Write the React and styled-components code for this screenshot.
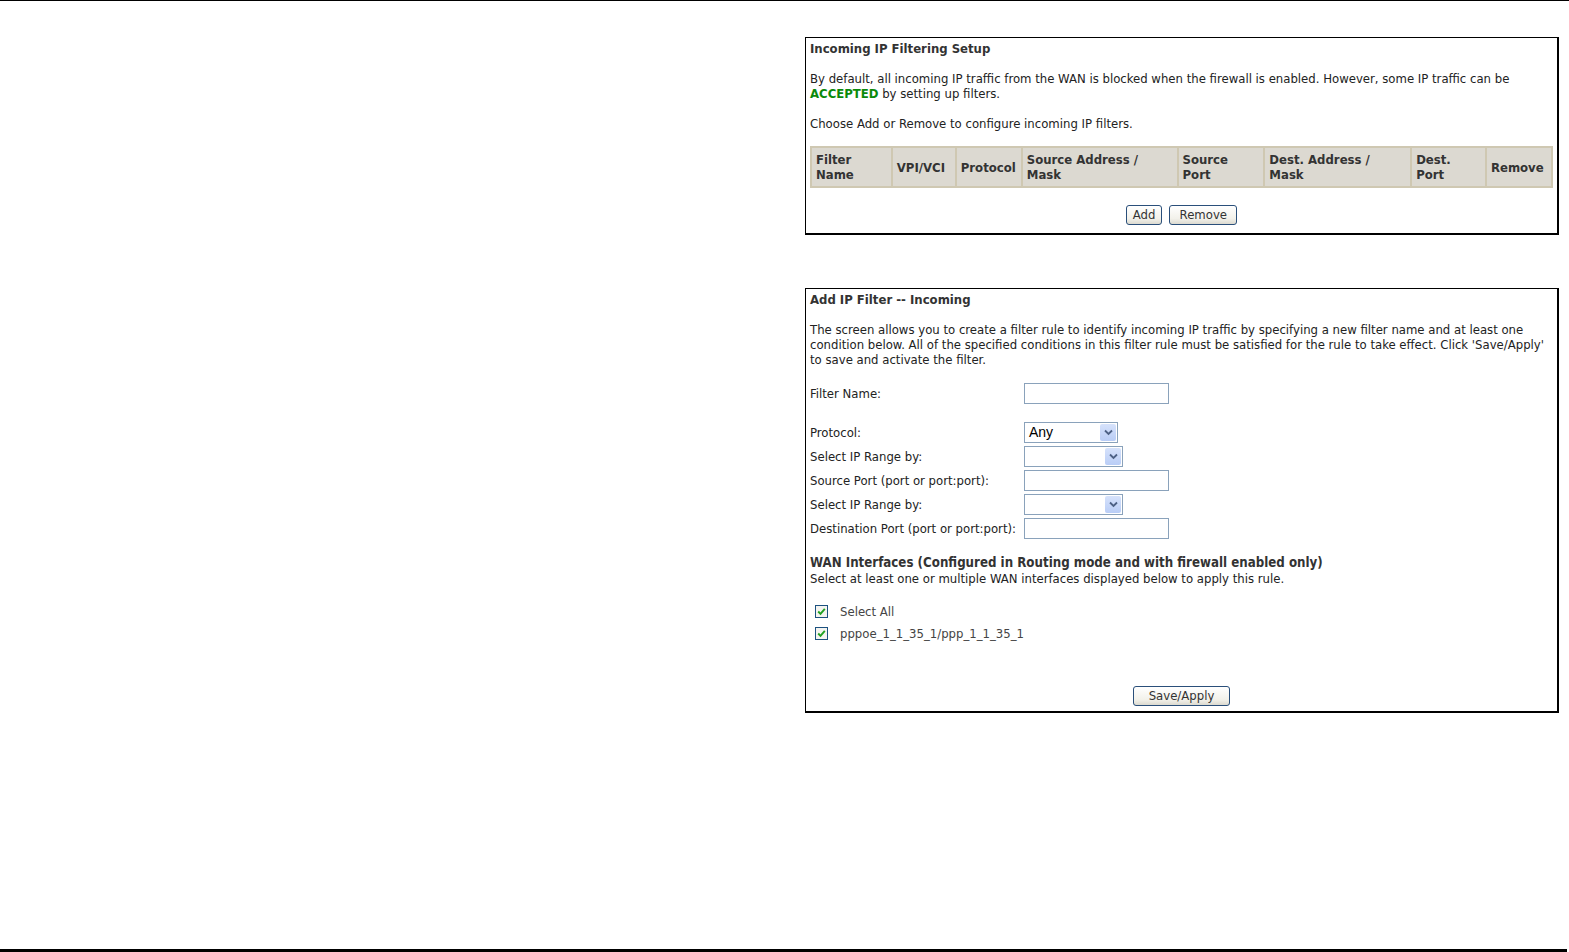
import React from 'react';
import styled, { createGlobalStyle } from 'styled-components';

const Global = createGlobalStyle`
  html, body { margin: 0; padding: 0; background: #fff; }
  body { font-family: "DejaVu Sans Condensed", "DejaVu Sans", sans-serif; font-size: 13px; color: #222; }
  * { box-sizing: border-box; }
`;

const Page = styled.div`
  height: 952px;
  display: flex;
  flex-direction: column;
  border-top: 1px solid #000;
`;

const Main = styled.div`
  flex: 1;
  padding: 36px 0 0 805px;
  display: flex;
  flex-direction: column;
  gap: 53px;
`;

const BottomRule = styled.div`
  height: 3px;
  margin-right: 2px;
  background: #000;
`;

const Panel = styled.div`
  width: 754px;
  height: ${p => p.h}px;
  border-top: 1px solid #000;
  border-left: 1px solid #000;
  border-right: 2px solid #000;
  border-bottom: 2px solid #000;
  padding: 3px 4px 0 4px;
  line-height: 15px;
`;

const Title = styled.div`
  font-weight: bold;
  margin-bottom: 15px;
  color: #333;
`;

const Para = styled.p`
  margin: 0 0 15px;
`;

const Accepted = styled.b`
  color: #0a8a0a;
`;

const Table = styled.table`
  width: 743px;
  border-collapse: collapse;
  border: 1px solid #c9c2ab;
`;

const Th = styled.th`
  width: ${p => p.w}px;
  background: #dcd9d1;
  border: 2px solid #cfc8b2;
  text-align: left;
  vertical-align: middle;
  font-weight: bold;
  padding: 4px 4px;
  line-height: 15px;
  color: #333;
  white-space: nowrap;
`;

const ButtonRow = styled.div`
  display: flex;
  justify-content: center;
  gap: 7px;
  margin-top: ${p => p.top}px;
`;

const Button = styled.button`
  font-family: inherit;
  font-size: 13px;
  color: #333;
  height: 20px;
  min-width: ${p => p.w}px;
  padding: 0 6px;
  border: 1px solid #2a4f7a;
  border-radius: 3px;
  background: linear-gradient(#ffffff, #f2f1ea 70%, #dcdad0);
  line-height: 18px;
`;

const Form = styled.div`
  display: grid;
  grid-template-columns: 214px auto;
  align-items: center;
  row-gap: 3px;
`;

const Label = styled.div`
  margin-top: ${p => p.top || 0}px;
  line-height: 21px;
  white-space: nowrap;
`;

const Field = styled.div`
  margin-top: ${p => p.top || 0}px;
  display: flex;
`;

const TextInput = styled.div`
  width: 145px;
  height: 21px;
  border: 1px solid #8aa2bb;
  background: #fff;
`;

const Select = styled.div`
  width: ${p => p.w}px;
  height: 21px;
  border: 1px solid #8aa2bb;
  background: #fff;
  display: flex;
  align-items: stretch;
  font-family: "Liberation Sans", Arial, sans-serif;
  font-size: 14px;
  color: #000;
`;

const SelectValue = styled.span`
  flex: 1;
  padding-left: 4px;
  line-height: 19px;
`;

const Arrow = styled.span`
  width: 16px;
  margin: 1px;
  border-radius: 2px;
  background: linear-gradient(#d6e2fb, #b9cdf6);
  display: flex;
  align-items: center;
  justify-content: center;
`;

const WanTitle = styled.div`
  font-weight: bold;
  font-size: 13.2px;
  margin-top: 16px;
  line-height: 16px;
  color: #333;
`;

const CheckList = styled.div`
  margin-top: 19px;
  padding-left: 5px;
  display: flex;
  flex-direction: column;
  gap: 9px;
`;

const CheckRow = styled.div`
  display: flex;
  align-items: center;
  gap: 12px;
  line-height: 13px;
  color: #444;
`;

const Box = styled.span`
  width: 13px;
  height: 13px;
  border: 1px solid #1c5180;
  background: #f4f4f0;
  display: flex;
  align-items: center;
  justify-content: center;
`;

const Chevron = () => (
  <svg width="9" height="7" viewBox="0 0 9 7">
    <path d="M1 1.5 L4.5 5 L8 1.5" fill="none" stroke="#4d6185" strokeWidth="1.8" />
  </svg>
);

const Check = () => (
  <svg width="9" height="9" viewBox="0 0 9 9">
    <path d="M1.2 4.5 L3.5 6.8 L7.8 1.8" fill="none" stroke="#21a121" strokeWidth="1.9" />
  </svg>
);

function Dropdown({ w, value }) {
  return (
    <Select w={w}>
      <SelectValue>{value}</SelectValue>
      <Arrow><Chevron /></Arrow>
    </Select>
  );
}

const headers = [
  [['Filter', 'Name'], 81], [['VPI/VCI'], 64], [['Protocol'], 66], [['Source Address /', 'Mask'], 156],
  [['Source', 'Port'], 87], [['Dest. Address /', 'Mask'], 147], [['Dest.', 'Port'], 75], [['Remove'], 66],
];

export default function App() {
  return (
    <Page>
      <Global />
      <Main>
        <Panel h={198}>
          <Title>Incoming IP Filtering Setup</Title>
          <Para>
            By default, all incoming IP traffic from the WAN is blocked when the firewall is enabled. However, some IP traffic can be<br />
            <Accepted>ACCEPTED</Accepted> by setting up filters.
          </Para>
          <Para>Choose Add or Remove to configure incoming IP filters.</Para>
          <Table>
            <thead>
              <tr>
                {headers.map(([lines, w]) => (
                  <Th key={lines.join(' ')} w={w}>
                    {lines.map((l, i) => (
                      <React.Fragment key={l}>{i > 0 && <br />}{l}</React.Fragment>
                    ))}
                  </Th>
                ))}
              </tr>
            </thead>
          </Table>
          <ButtonRow top={17}>
            <Button w={33}>Add</Button>
            <Button w={68}>Remove</Button>
          </ButtonRow>
        </Panel>

        <Panel h={425}>
          <Title>Add IP Filter -- Incoming</Title>
          <Para>
            The screen allows you to create a filter rule to identify incoming IP traffic by specifying a new filter name and at least one
            condition below. All of the specified conditions in this filter rule must be satisfied for the rule to take effect. Click 'Save/Apply'
            to save and activate the filter.
          </Para>
          <Form>
            <Label top={1}>Filter Name:</Label>
            <Field top={1}><TextInput /></Field>
            <Label top={15}>Protocol:</Label>
            <Field top={15}><Dropdown w={94} value="Any" /></Field>
            <Label>Select IP Range by:</Label>
            <Field><Dropdown w={99} value="" /></Field>
            <Label>Source Port (port or port:port):</Label>
            <Field><TextInput /></Field>
            <Label>Select IP Range by:</Label>
            <Field><Dropdown w={99} value="" /></Field>
            <Label>Destination Port (port or port:port):</Label>
            <Field><TextInput /></Field>
          </Form>
          <WanTitle>WAN Interfaces (Configured in Routing mode and with firewall enabled only)</WanTitle>
          <div>Select at least one or multiple WAN interfaces displayed below to apply this rule.</div>
          <CheckList>
            <CheckRow><Box><Check /></Box>Select All</CheckRow>
            <CheckRow><Box><Check /></Box>pppoe_1_1_35_1/ppp_1_1_35_1</CheckRow>
          </CheckList>
          <ButtonRow top={46}>
            <Button w={97}>Save/Apply</Button>
          </ButtonRow>
        </Panel>
      </Main>
      <BottomRule />
    </Page>
  );
}
